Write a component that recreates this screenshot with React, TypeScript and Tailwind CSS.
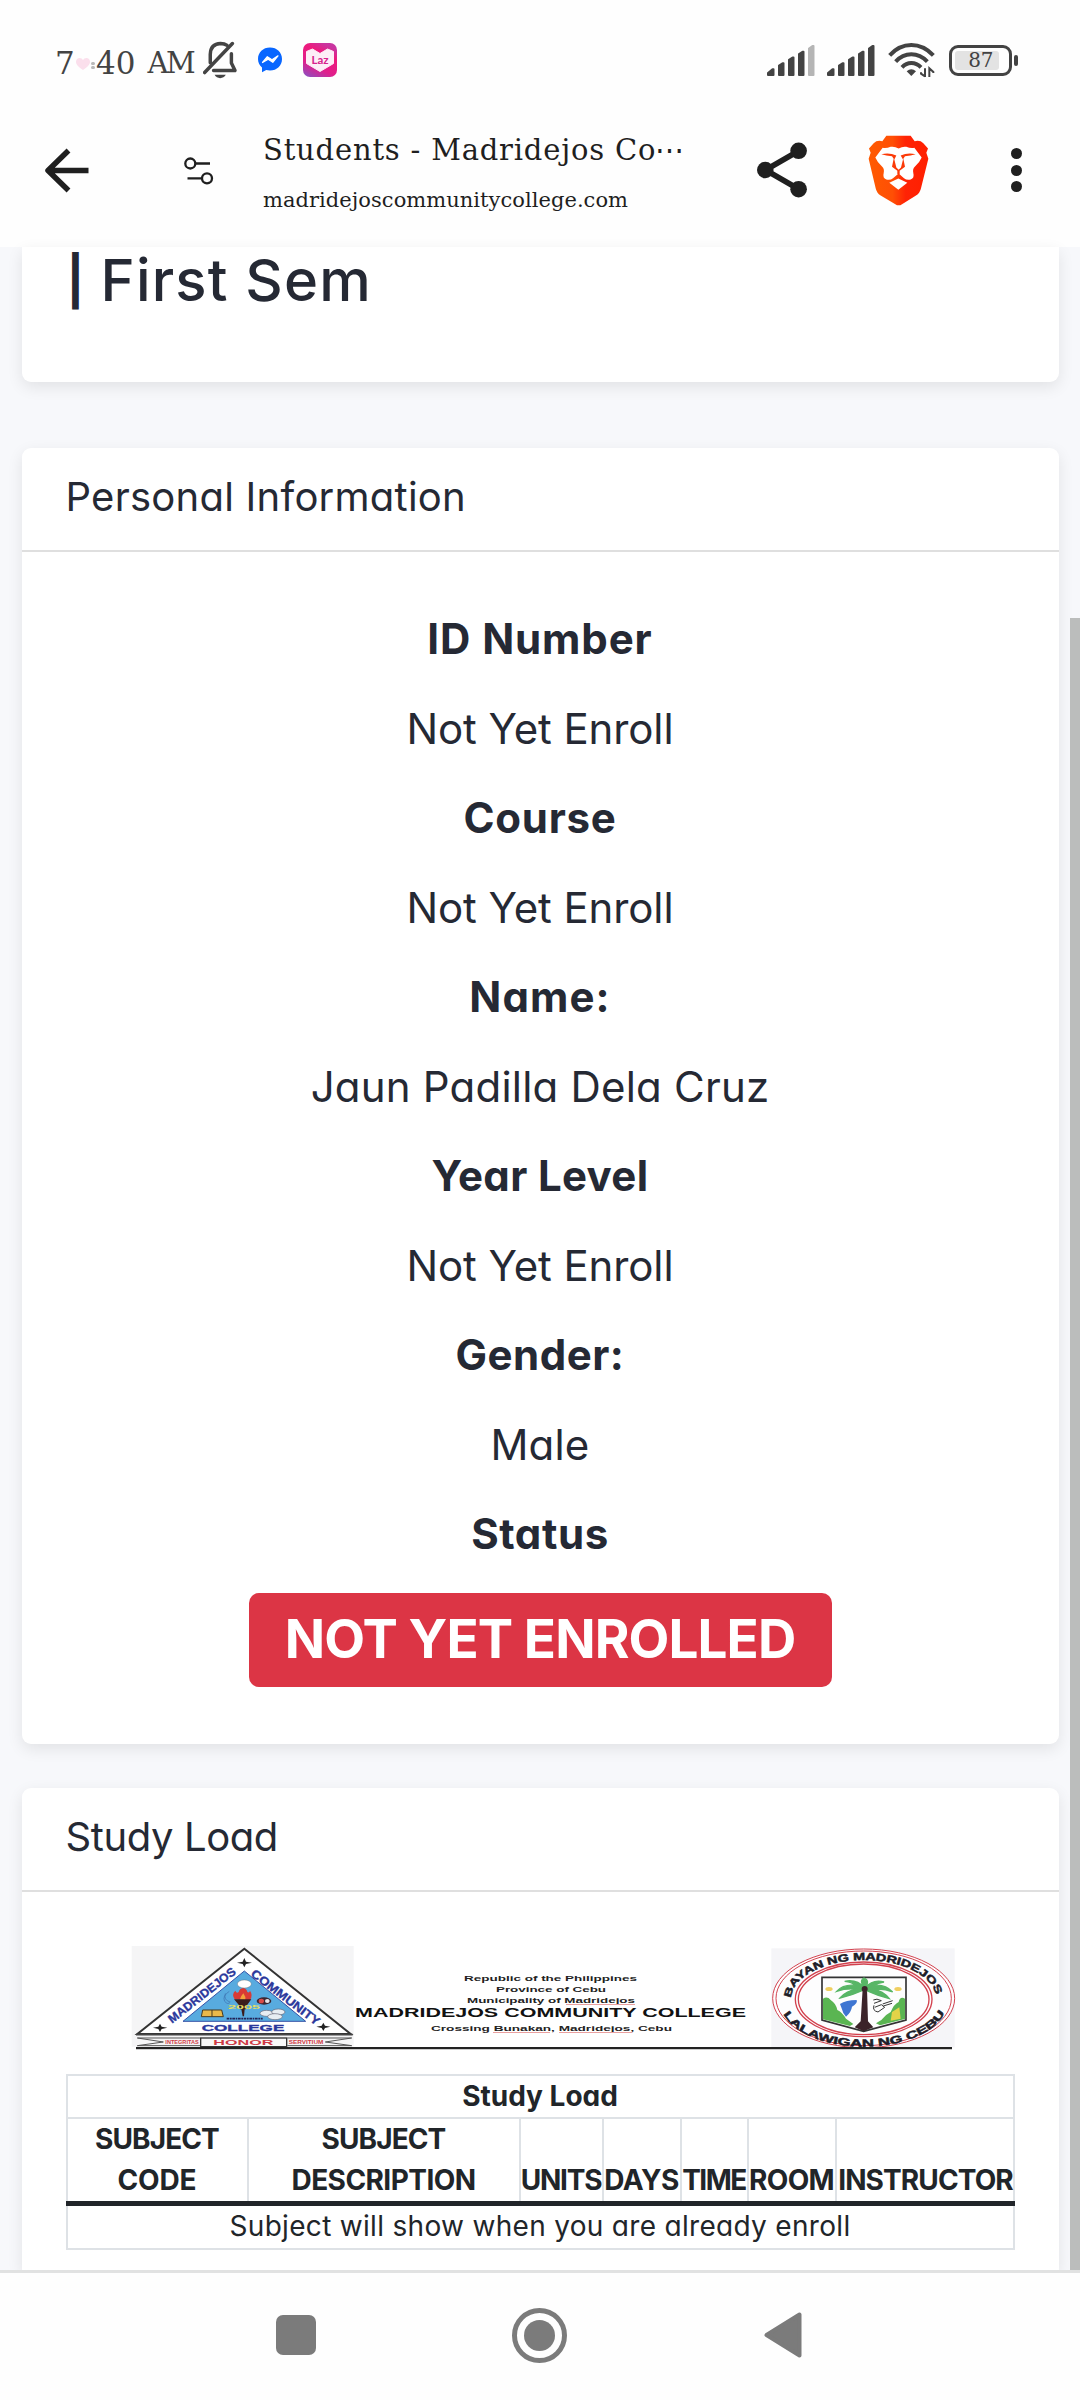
import type { ReactNode } from 'react';

const serif = "font-['DejaVu_Serif',serif]";

function BellOff() {
  return (
    <svg width="35" height="38" viewBox="69 36 106 114" fill="none" stroke="#444" strokeWidth="10.500" strokeLinecap="round">
      <path d="M91 101 V76 Q92 44 122 43 Q134 43 142 49" />
      <path d="M74 131 L158 43" />
      <path d="M155 74 V102 L166 125 H101" strokeLinejoin="round" />
      <path d="M104 138 H138 Q132 148 121 148 Q110 148 104 138 Z" fill="#444" stroke="none" />
    </svg>
  );
}

function Messenger() {
  return (
    <svg width="24" height="26" viewBox="0 0 24 26">
      <path d="M12 0.5C5 0.5 0 5.4 0 12c0 3.500 1.500 6.500 4 8.600V25.300l4.200-2.300c1.200.3 2.500.5 3.800.5 7 0 12-4.900 12-11.500S19 .5 12 .5Z" fill="#0866ff" />
      <path d="M4.500 15.500 9.300 9.700 14 12.800 20 8.800 14.800 15.300 10.200 12.200Z" fill="#fff" stroke="#fff" strokeWidth="1.200" strokeLinejoin="round" />
    </svg>
  );
}

function Lazada() {
  return (
    <svg width="34" height="34" viewBox="0 0 34 34">
      <defs>
        <linearGradient id="laz" x1="0.100" y1="1" x2="0.600" y2="0">
          <stop offset="0" stopColor="#8d4fc0" />
          <stop offset="0.350" stopColor="#e01f8c" />
          <stop offset="0.750" stopColor="#ee1a7c" />
          <stop offset="1" stopColor="#c935a0" />
        </linearGradient>
      </defs>
      <rect width="34" height="34" rx="7" fill="url(#laz)" />
      <path d="M3.500 8.500 9.500 6 17 10.500 24.500 6 30.500 8.500V20.500L17 28.500 3.500 20.500Z" fill="#fdeef7" stroke="#fdeef7" strokeLinejoin="round" />
      <text x="8.500" y="20.800" fontFamily="Lato, sans-serif" fontWeight="700" fontSize="11.500" fill="#d6228d" textLength="17" lengthAdjust="spacingAndGlyphs">Laz</text>
    </svg>
  );
}

function Signal({ full }: { full: boolean }) {
  return (
    <svg width="48" height="31" viewBox="0 0 48 31" fill="#434343" stroke="#434343" strokeWidth="2" strokeLinejoin="round">
      <path d="M1 30V28L5.500 24.300H6.500V30Z" />
      <path d="M12 30V20.500L15.500 18.300H16.500V30Z" />
      <path d="M22 30V14.800L25.500 12.500H26.500V30Z" />
      <path d="M32 30V9L35.500 6.800H36.500V30Z" />
      <path d="M42 30V3.500L45.500 1H46.500V30Z" fill={full ? '#434343' : '#b5b5b5'} stroke={full ? '#434343' : '#b5b5b5'} />
    </svg>
  );
}

function Wifi() {
  return (
    <svg width="48" height="36" viewBox="442 38 144 108" fill="none" stroke="#434343" strokeWidth="12">
      <path d="M447 78 Q475 47 512 47 Q549 47 578 78" />
      <path d="M465 97 Q485 75 512 75 Q539 75 560 97" />
      <path d="M484 114 Q496 101 512 101 Q528 101 541 114" />
      <path d="M498 126 Q512 114 526 126 L512 140 Z" fill="#434343" stroke="none" />
      <path d="M553 117 V143 M541 129 V133 L553 141 M566 143 V117 L578 128 V131" strokeWidth="6" />
    </svg>
  );
}

function Battery() {
  return (
    <div className="flex items-center">
      <div className="flex h-[31px] w-[63px] items-center rounded-[9px] border-[3px] border-[#434343] pl-[3px]">
        <div className="flex h-[19px] w-[44px] items-center justify-end rounded-[3px] bg-[#e3e3e3] pr-[6px]">
          <span className={`${serif} text-[20px] leading-none tracking-[-0.4px] text-[#434343]`}>87</span>
        </div>
      </div>
      <div className="ml-[2px] h-[11px] w-[4px] rounded-[2px] bg-[#434343]" />
    </div>
  );
}

function StatusBar() {
  return (
    <div className="flex h-[120px] items-center pr-[62px] pl-[55px]">
      <div className={`${serif} mt-[7px] flex w-[148px] items-center text-[31px] leading-none text-[#434343]`}>
        <span className="w-[21px] shrink-0">7</span>
        <svg width="14" height="12" viewBox="0 0 14 12" className="shrink-0">
          <path d="M7 12C3 9 0 7 0 3.700 0 1.500 1.600 0 3.600 0 5 0 6.300.8 7 2 7.700.8 9 0 10.400 0c2 0 3.600 1.500 3.600 3.700C14 7 11 9 7 12Z" fill="#fbdfec" />
        </svg>
        <div className="mt-[3px] mr-[1px] ml-[1px] flex w-[4px] shrink-0 flex-col gap-[1px]">
          <i className="h-[3px] rounded-full bg-[#b9b9b9]" />
          <i className="h-[3px] rounded-full bg-[#b9b9b9]" />
        </div>
        <span>40</span>
        <span className="ml-[12px] text-[29px] tracking-[-2.5px]">AM</span>
      </div>
      <BellOff />
      <div className="ml-[20px]"><Messenger /></div>
      <div className="ml-[21px]"><Lazada /></div>
      <div className="ml-auto flex items-center">
        <Signal full={false} />
        <div className="ml-[12px]"><Signal full /></div>
        <div className="ml-[13px]"><Wifi /></div>
        <div className="ml-[13px]"><Battery /></div>
      </div>
    </div>
  );
}

function BraveLion() {
  return (
    <svg width="61" height="71" viewBox="54 46 183 212">
      <defs>
        <linearGradient id="brave" x1="0" x2="1" y1="0" y2="0">
          <stop offset="0" stopColor="#ff5a00" />
          <stop offset="0.400" stopColor="#ff4f05" />
          <stop offset="0.620" stopColor="#ff2305" />
          <stop offset="1" stopColor="#ff1f00" />
        </linearGradient>
      </defs>
      <path d="M109 48H182L194 64Q210 60 220 70L234 86 229 99 235 117 213 205Q210 219 198 227L156 253Q146 260 136 253L92 227Q80 219 77 205L56 117 62 99 57 86 71 70Q81 60 97 64Z" fill="url(#brave)" />
      <path d="M98 84 Q110 86 122 81 Q134 79 146 86 Q158 79 169 81 Q181 86 193 84 L215 113 Q210 126 195 140 Q187 147 190 160 Q194 174 182 179 Q170 182 162 175 L146 161 L129 175 Q121 182 109 179 Q97 174 101 160 Q104 147 96 140 Q81 126 76 113Z" fill="#fff" />
      <path d="M94 103 Q118 97 139 107 L133 119 L139 143 L146 150 L153 143 L159 119 L152 107 Q173 97 197 103 Q182 107 165 109 L160 117 L165 141 L149 153 V163 H142 V153 L126 141 L131 117 L126 109 Q109 107 94 103Z" fill="#fb3a08" />
      <path d="M118 189 L145 176 L172 189 L145 210Z" fill="#fff" />
    </svg>
  );
}

function Toolbar() {
  return (
    <div className="flex h-[100px] items-center pl-[44px] text-[#1f1f1f]">
      <svg width="45" height="45" viewBox="0 0 45 45" fill="none" stroke="#1f1f1f" strokeWidth="5.500" strokeLinejoin="round" className="shrink-0">
        <path d="M44.500 22.500H4M24.500 2.500 4 22.500 24.500 42.500" />
      </svg>
      <svg width="30" height="28" viewBox="0 0 30 28" fill="none" stroke="#1f1f1f" strokeWidth="2.300" className="mt-[1px] ml-[95px] shrink-0">
        <circle cx="6.300" cy="6.500" r="5" />
        <path d="M11.300 6.500H26M3.500 21.300H18" />
        <circle cx="23" cy="21.300" r="5" />
      </svg>
      <div className={`${serif} mt-[3px] ml-[49px] w-[424px] shrink-0 whitespace-nowrap`}>
        <div className="flex text-[29px] leading-[40px] tracking-[0.8px]">
          <span className="w-[392px] shrink-0">Students - Madridejos Co</span>
          <span className="tracking-normal">⋯</span>
        </div>
        <div className="mt-[17px] text-[21px] leading-[27px] tracking-[0.04px]">madridejoscommunitycollege.com</div>
      </div>
      <svg width="50" height="56" viewBox="757 142 50 56" className="ml-[70px] shrink-0">
        <path d="M798.500 151 765.500 170 798.500 189" fill="none" stroke="#1f1f1f" strokeWidth="5.500" />
        <circle cx="765.300" cy="170" r="8.300" fill="#1f1f1f" />
        <circle cx="798.600" cy="150.800" r="8.300" fill="#1f1f1f" />
        <circle cx="798.600" cy="189.200" r="8.300" fill="#1f1f1f" />
      </svg>
      <div className="ml-[61px] shrink-0"><BraveLion /></div>
      <div className="ml-[82px] flex shrink-0 flex-col gap-[5.500px]">
        <i className="h-[11px] w-[11px] rounded-full bg-[#1f1f1f]" />
        <i className="h-[11px] w-[11px] rounded-full bg-[#1f1f1f]" />
        <i className="h-[11px] w-[11px] rounded-full bg-[#1f1f1f]" />
      </div>
    </div>
  );
}

function Card({ title, tracking, className, children }: { title: string; tracking: string; className: string; children: ReactNode }) {
  return (
    <section className={`mx-auto w-[1037px] bg-white shadow-[0_5px_16px_rgba(0,0,0,0.09)] ${className}`}>
      <header className={`flex h-[104px] items-center border-b-2 border-[#dfdfdf] pb-1 pl-[44px] text-[40px] text-[#252934] ${tracking}`}>
        {title}
      </header>
      {children}
    </section>
  );
}

const fields = [
  { label: 'ID Number', labelTracking: 'tracking-[0.9px]', value: 'Not Yet Enroll', valueTracking: 'tracking-[-0.1px]' },
  { label: 'Course', labelTracking: 'tracking-[0.7px]', value: 'Not Yet Enroll', valueTracking: 'tracking-[-0.1px]' },
  { label: 'Name:', labelTracking: 'tracking-[1.1px]', value: 'Jaun Padilla Dela Cruz', valueTracking: 'tracking-[0.2px]' },
  { label: 'Year Level', labelTracking: 'tracking-[0.35px]', value: 'Not Yet Enroll', valueTracking: 'tracking-[-0.1px]' },
  { label: 'Gender:', labelTracking: 'tracking-[0.5px]', value: 'Male', valueTracking: 'tracking-[0.2px]' },
];

function CollegeEmblem() {
  return (
    <g transform="translate(100 1920) scale(0.33333)" fontFamily="Liberation Sans, sans-serif">
      <rect x="95" y="78" width="666" height="302" fill="#f5f5f6" />
      <path d="M433 86 752 342H112Z" fill="#fff" stroke="#333" strokeWidth="6" />
      <path d="M433 153 617 304H249Z" fill="#58abdf" stroke="#3553a8" strokeWidth="3" />
      <g fill="#222">
        <path d="M433 114 438 125 456 128 438 132 433 142 428 132 411 128 428 125Z" />
        <path d="M180 311 185 320 202 323 185 327 180 336 175 327 159 323 175 320Z" />
        <path d="M670 308 675 317 691 320 675 324 670 333 665 324 649 320 665 317Z" />
      </g>
      <g fontWeight="700" fill="#2b389c" stroke="#2b389c">
        <text transform="translate(216 311) rotate(-38)" fontSize="36" textLength="246" lengthAdjust="spacingAndGlyphs">MADRIDEJOS</text>
        <text transform="translate(450 166) rotate(37.500)" fontSize="36" textLength="250" lengthAdjust="spacingAndGlyphs">COMMUNITY</text>
        <text x="305" y="332" fontSize="28" textLength="248" lengthAdjust="spacingAndGlyphs">COLLEGE</text>
      </g>
      <ellipse cx="433" cy="192" rx="21" ry="12" fill="#fff" stroke="#555" />
      <path d="M388 214Q366 228 374 244 384 256 391 246M376 220Q370 240 390 246" fill="none" stroke="#3b6fae" strokeWidth="2" />
      <path d="M404 238Q394 222 406 212 410 222 416 216 418 206 430 204 440 206 442 216 448 220 450 212 460 226 450 240Z" fill="#d83a35" />
      <path d="M420 238Q424 226 430 220 438 230 436 240Z" fill="#f2a23b" />
      <path d="M402 238H454L442 254 438 268H434L432 289H428L424 268H420L416 254Z" fill="#3a1c1c" />
      <text x="384" y="268" fontSize="16" fontWeight="700" fill="#e6dd61" textLength="96" lengthAdjust="spacingAndGlyphs">2005</text>
      <ellipse cx="492" cy="243" rx="22" ry="11" fill="#3a2732" />
      <ellipse cx="484" cy="243" rx="8" ry="7" fill="#d94c48" />
      <ellipse cx="502" cy="243" rx="7" ry="6" fill="#e8e4e8" />
      <path d="M308 270H365L370 290H304Z" fill="#e9b94a" stroke="#443a20" strokeWidth="3" />
      <path d="M336 270V290" stroke="#443a20" strokeWidth="3" />
      <g fill="#e7edf2" stroke="#667" strokeWidth="2">
        <ellipse cx="500" cy="280" rx="20" ry="9" />
        <ellipse cx="535" cy="276" rx="20" ry="9" />
        <ellipse cx="525" cy="290" rx="22" ry="9" />
      </g>
      <path d="M380 296H488" stroke="#225" strokeWidth="5" strokeDasharray="8 2 5 2" />
      <path d="M108 344H758" stroke="#444" strokeWidth="5" />
      <path d="M112 354H300M112 377H300M112 354 190 366 112 377M755 354H562M755 377H562M755 354 676 366 755 377" fill="none" stroke="#555" strokeWidth="3" />
      <rect x="302" y="354" width="258" height="26" fill="#f8f8f8" stroke="#333" strokeWidth="4" />
      <g fontWeight="700" fill="#cf3a45">
        <text x="196" y="373" fontSize="18" textLength="100" lengthAdjust="spacingAndGlyphs">INTEGRITAS</text>
        <text x="340" y="374" fontSize="20" textLength="180" lengthAdjust="spacingAndGlyphs">HONOR</text>
        <text x="566" y="373" fontSize="18" textLength="104" lengthAdjust="spacingAndGlyphs">SERVITIUM</text>
      </g>
    </g>
  );
}

function TownSeal() {
  return (
    <g transform="translate(740 1920) scale(0.33333)" fontFamily="Liberation Sans, sans-serif">
      <rect x="94" y="85" width="550" height="297" fill="#f5f5f8" />
      <g stroke="#d2404d" fill="#fdfdfe">
        <ellipse cx="371" cy="235" rx="273" ry="148" strokeWidth="3" />
        <ellipse cx="371" cy="235" rx="263" ry="142" strokeWidth="3" />
        <ellipse cx="371" cy="238" rx="205" ry="112" strokeWidth="4" />
        <ellipse cx="371" cy="238" rx="196" ry="106" strokeWidth="4" />
      </g>
      <path id="sealTop" d="M153 238A218 118 0 0 1 589 238" fill="none" />
      <path id="sealBottom" d="M122 258A250 134 0 0 0 620 258" fill="none" />
      <g fontWeight="700" fontSize="31" fill="#1c1c28" stroke="#1c1c28" strokeWidth="1.500">
        <text><textPath href="#sealTop" startOffset="4" textLength="522" lengthAdjust="spacingAndGlyphs">BAYAN NG MADRIDEJOS</textPath></text>
        <text><textPath href="#sealBottom" startOffset="26" textLength="545" lengthAdjust="spacingAndGlyphs">LALAWIGAN NG CEBU</textPath></text>
      </g>
      <path d="M246 172H498V300L371 334 246 300Z" fill="#fdfdfd" stroke="#333" strokeWidth="5" />
      <path d="M249 236Q262 228 272 240 288 250 292 270 306 276 318 296L340 312 330 318 249 298Z" fill="#5ab552" />
      <path d="M495 236Q480 228 476 246 462 252 452 276 436 284 424 300L408 310 420 316 495 297Z" fill="#5ab552" />
      <path d="M456 276 478 262 482 296 452 302Z" fill="#e2d348" />
      <path d="M300 252Q318 240 350 240 354 250 336 260 334 276 318 290 308 280 306 268Z" fill="#3f76d2" />
      <path d="M400 240Q410 234 424 242L402 250M402 256Q396 272 414 276L434 262 424 254 404 262M428 252 458 242M430 258 456 250" fill="none" stroke="#333" strokeWidth="3" />
      <ellipse cx="267" cy="207" rx="11" ry="6" fill="#f0cf60" />
      <ellipse cx="474" cy="207" rx="11" ry="6" fill="#f0cf60" />
      <path d="M368 206H381L384 304 400 322 371 334 344 322 362 304Z" fill="#3b2329" />
      <path d="M374 204Q350 176 314 184 336 186 346 196 310 192 290 214 320 204 350 208 318 212 300 234 336 226 366 212ZM374 204Q400 176 432 186 414 188 402 196 436 192 458 216 430 204 398 208 430 212 448 236 410 226 380 212ZM374 204Q356 182 372 174 392 182 374 204Z" fill="#58b666" stroke="#58b666" strokeWidth="4" />
      <circle cx="374" cy="207" r="9" fill="#3b2329" />
    </g>
  );
}

function Letterhead() {
  return (
    <svg width="948" height="108" viewBox="66 1942 948 108" className="mt-[50px] block">
      <CollegeEmblem />
      <TownSeal />
      <g fontFamily="Liberation Sans, sans-serif" fill="#222" fontWeight="700" fontSize="7.500">
        <text x="464" y="1981" textLength="173" lengthAdjust="spacingAndGlyphs">Republic of the Philippines</text>
        <text x="496" y="1992" textLength="110" lengthAdjust="spacingAndGlyphs">Province of Cebu</text>
        <text x="467" y="2003" textLength="168" lengthAdjust="spacingAndGlyphs">Municipality of Madridejos</text>
        <text x="431" y="2031" textLength="241" lengthAdjust="spacingAndGlyphs">Crossing Bunakan, Madridejos, Cebu</text>
        <text x="355" y="2017" fontSize="12" fill="#111" textLength="391" lengthAdjust="spacingAndGlyphs">MADRIDEJOS COMMUNITY COLLEGE</text>
      </g>
      <path d="M566 2004.500H635M493 2032.500H550M559 2032.500H632" stroke="#e9a0a0" />
      <path d="M136 2048H952" stroke="#222" strokeWidth="2" />
      <path d="M136 2049.500H952" stroke="#ccc" />
    </svg>
  );
}

const cell = 'flex items-end justify-center border-l-2 border-[#dee2e6] text-center whitespace-nowrap';

function StudyLoadTable() {
  return (
    <div className="mt-[24px] w-[949px] text-[28px] leading-[41px] text-[#212529]">
      <div className="h-[43px] border-2 border-b-0 border-[#dee2e6] text-center font-bold">Study Load</div>
      <div className="grid h-[84px] grid-cols-[181px_272px_83px_78px_67px_88px_180px] border-t-2 border-r-2 border-[#dee2e6] font-bold">
        <div className={`${cell} tracking-[-0.9px]`}><span>SUBJECT<br /><span className="tracking-[-0.13px]">CODE</span></span></div>
        <div className={`${cell} tracking-[-0.9px]`}><span>SUBJECT<br /><span className="tracking-[-0.56px]">DESCRIPTION</span></span></div>
        <div className={`${cell} tracking-[-1.2px]`}>UNITS</div>
        <div className={`${cell} tracking-[-0.5px]`}>DAYS</div>
        <div className={`${cell} tracking-[-1.5px]`}>TIME</div>
        <div className={`${cell} tracking-[-0.6px]`}>ROOM</div>
        <div className={`${cell} tracking-[-0.9px]`}>INSTRUCTOR</div>
      </div>
      <div className="h-[5px] bg-[#212529]" />
      <div className="h-[44px] border-2 border-t-0 border-[#dee2e6] text-center tracking-[0.31px]">
        Subject will show when you are already enroll
      </div>
    </div>
  );
}

function NavBar() {
  return (
    <nav className="relative flex h-[130px] items-center border-t-[3px] border-[#e1e2e2] bg-[#fefefe] pb-[3px] pl-[276px]">
      <div className="h-[40px] w-[40px] rounded-[7px] bg-[#7b7b7b]" />
      <div className="ml-[196px] flex h-[55px] w-[55px] items-center justify-center rounded-full border-[5px] border-[#7b7b7b]">
        <div className="h-[31px] w-[31px] rounded-full bg-[#7b7b7b]" />
      </div>
      <svg width="38" height="46" viewBox="0 0 38 46" className="ml-[197px]">
        <path d="M2.500 23 35.500 2.500V43.500Z" fill="#7b7b7b" stroke="#7b7b7b" strokeWidth="4" strokeLinejoin="round" />
      </svg>
    </nav>
  );
}

export default function App() {
  return (
    <div className="h-[2400px] w-[1080px] overflow-hidden bg-[#fefefe]">
      <div className="h-[247px]">
        <StatusBar />
        <Toolbar />
      </div>
      <main className="relative h-[2023px] bg-[#f7f8fb] font-['Inter',sans-serif] [font-feature-settings:'cv11']">
        <section className="mx-auto flex h-[135px] w-[1037px] rounded-b-[9px] bg-white pl-[45px] text-[58px] leading-[67px] font-medium tracking-[1.2px] text-[#252934] shadow-[0_5px_16px_rgba(0,0,0,0.09)]">
          <span className="w-[34px] text-[48px] font-bold">|</span>
          <span>First Sem</span>
        </section>
        <Card title="Personal Information" tracking="tracking-[0.25px]" className="mt-[66px] h-[1296px] rounded-[9px]">
          <div className="flex flex-col items-center pt-[42px] text-[42px] leading-[89.5px] text-[#252934]">
            {fields.map((f) => (
              <div key={f.label} className="flex flex-col items-center">
                <b className={`font-bold ${f.labelTracking}`}>{f.label}</b>
                <span className={f.valueTracking}>{f.value}</span>
              </div>
            ))}
            <b className="font-bold tracking-[0.6px]">Status</b>
            <div className="mt-[14px] flex h-[94px] w-[583px] items-center justify-center rounded-[10px] bg-[#dc3545] text-[53px] leading-none font-bold tracking-[-0.9px] whitespace-nowrap text-white">
              NOT YET ENROLLED
            </div>
          </div>
        </Card>
        <Card title="Study Load" tracking="tracking-[-0.4px]" className="mt-[44px] h-[482px] rounded-t-[9px]">
          <div className="pl-[44px]">
            <Letterhead />
            <StudyLoadTable />
          </div>
        </Card>
        <div className="absolute top-[371px] right-0 h-[1652px] w-[10px] bg-[#bbbdbc]" />
      </main>
      <NavBar />
    </div>
  );
}
